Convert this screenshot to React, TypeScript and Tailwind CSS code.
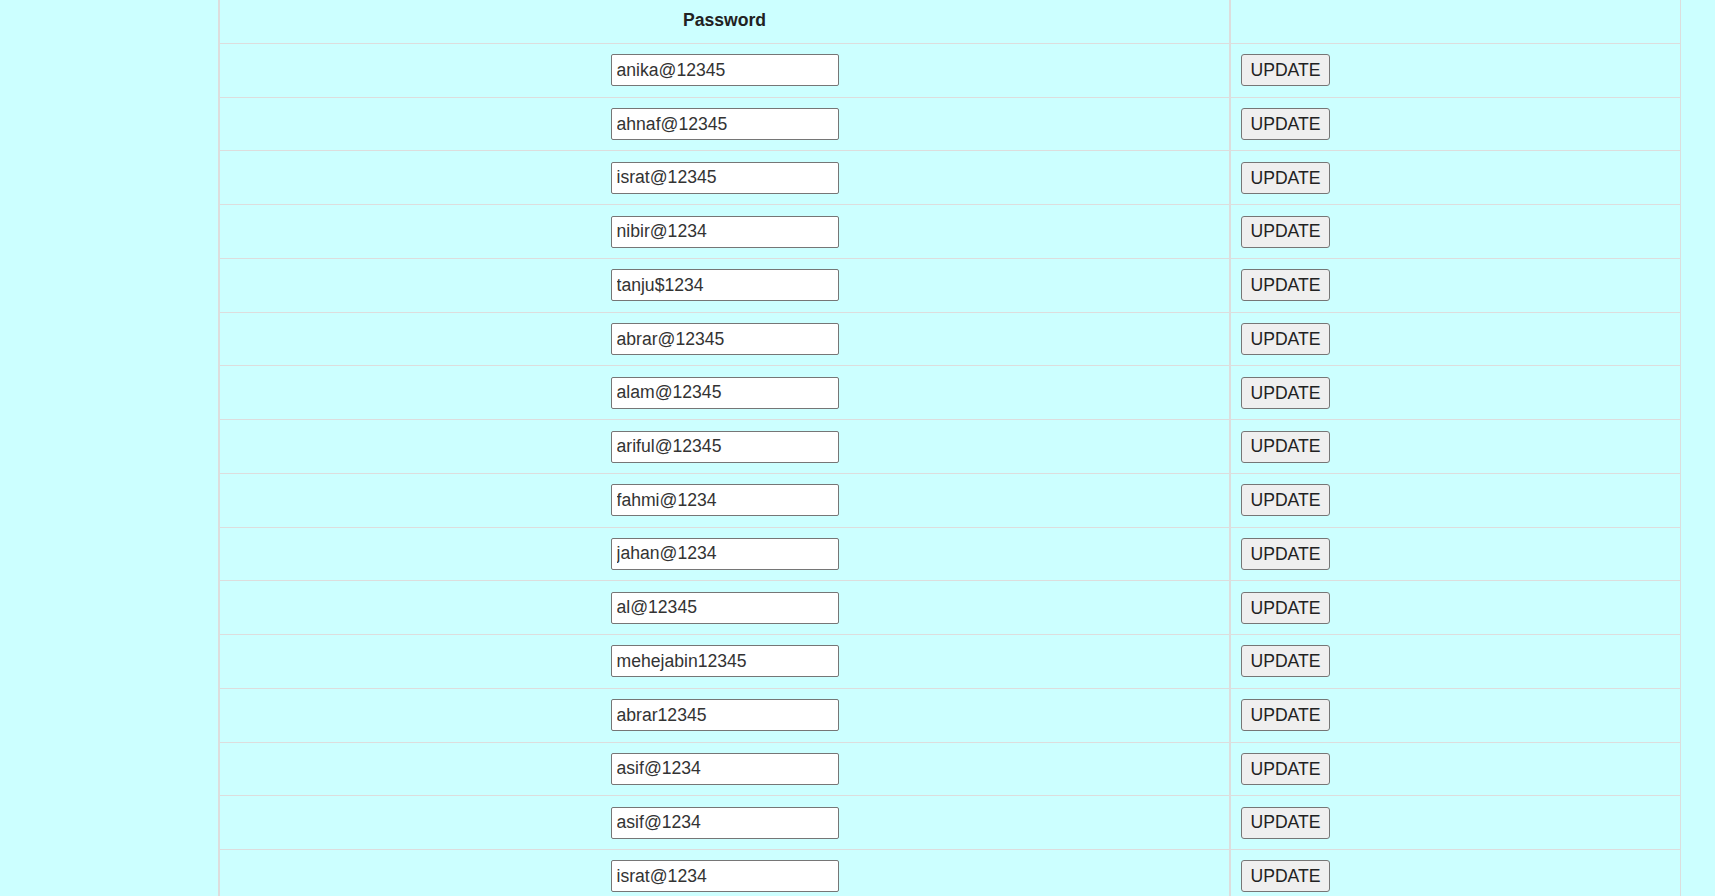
const passwords = [
  'anika@12345',
  'ahnaf@12345',
  'israt@12345',
  'nibir@1234',
  'tanju$1234',
  'abrar@12345',
  'alam@12345',
  'ariful@12345',
  'fahmi@1234',
  'jahan@1234',
  'al@12345',
  'mehejabin12345',
  'abrar12345',
  'asif@1234',
  'asif@1234',
  'israt@1234',
];

export default function App() {
  return (
    <div className="min-h-screen bg-[#ccffff] font-['Liberation_Sans',Arial,sans-serif] text-[17.6px] text-[#222]">
      <div className="ml-[218px] w-[1463px] border-l-2 border-r border-[#dddddd]">
        {/* header */}
        <div className="flex h-[44px] border-b border-[#dddddd]">
          <div className="w-[1009px] flex items-center justify-center pb-[3px] font-bold">
            Password
          </div>
          <div className="flex-1 border-l-2 border-[#dddddd]" />
        </div>

        {passwords.map((pw, i) => (
          <div key={i} className="flex h-[53.74px] border-b border-[#dddddd]">
            <div className="w-[1009px] flex items-center justify-center">
              <input
                type="text"
                defaultValue={pw}
                className="w-[228px] h-[32px] bg-white border border-[#767676] rounded-[2px] px-[5px] text-[17.6px] text-[#333] outline-none"
              />
            </div>
            <div className="flex-1 border-l-2 border-[#dddddd] flex items-center pl-[10px]">
              <button className="w-[89px] h-[32px] bg-[#efefef] border border-[#767676] rounded-[3px] text-[17.6px] text-[#222]">
                UPDATE
              </button>
            </div>
          </div>
        ))}
      </div>
    </div>
  );
}
